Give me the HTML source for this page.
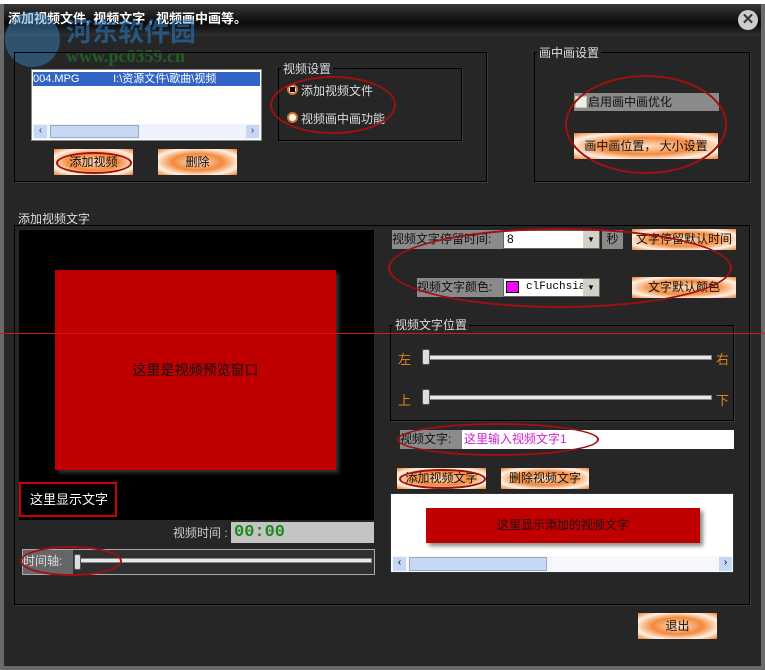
<!DOCTYPE html><html><head><meta charset="utf-8"><style>
*{margin:0;padding:0;box-sizing:border-box}
body{width:765px;height:670px;overflow:hidden;background:#fff;font-family:"Liberation Sans","Noto Sans CJK SC",sans-serif;font-size:12px;position:relative}
.a{position:absolute}
.win{left:0;top:4px;width:765px;height:666px;background:#262626;border:4px solid #6a6a6a;border-top:0}
.title{left:4px;top:4px;width:757px;height:32px;background:linear-gradient(#383838,#0a0a0a 60%,#303030)}
.grp{border:1px solid #000;box-shadow:1px 1px 0 #3a3a3a}
.lbl{color:#ddd;background:#262626;padding:0 2px;font-size:12px}
.btn{background:radial-gradient(ellipse at 50% 50%,#fde0c8 0,#f28a3c 45%,#fff2e6 75%,#ec7a2a 100%);color:#111;text-align:center;font-size:12px}
.ell{border:2px solid #a01010;border-radius:50%}
.gray{background:#8a8a8a;color:#111}
.track{height:5px;background:#e8e8e8;border:1px solid #888}
.thumb{width:8px;height:16px;background:#ddd;border:1px solid #555;border-radius:2px}
.or{color:#e08020;font-size:13px}
</style></head><body>
<div class="a win"></div>
<div class="a title"></div>
<div class="a" style="left:8px;top:8px;color:#fff;font-weight:bold;font-size:13px">添加视频文件, 视频文字 , 视频画中画等。</div>
<div class="a" style="left:5px;top:12px;width:55px;height:55px;border-radius:50%;background:rgba(60,140,200,.45)"></div>
<div class="a" style="left:66px;top:12px;color:rgba(40,120,190,.6);font-size:26px;font-weight:bold">河东软件园</div>
<div class="a" style="left:66px;top:46px;color:rgba(30,130,40,.6);font-size:18px;font-weight:bold;font-family:'Liberation Serif',serif">www.pc0359.cn</div>
<div class="a" style="left:738px;top:10px;width:20px;height:20px;border-radius:50%;background:#ccc;color:#333;font-weight:bold;text-align:center;line-height:20px;font-size:15px">✕</div>

<div class="a grp" style="left:14px;top:52px;width:473px;height:130px"></div>
<div class="a" style="left:31px;top:69px;width:231px;height:72px;background:#fff;border:1px solid #888"></div>
<div class="a" style="left:33px;top:72px;width:227px;height:14px;background:#3164c4;color:#fff;font-size:11px;line-height:14px;white-space:nowrap;overflow:hidden">004.MPG&nbsp;&nbsp;&nbsp;&nbsp;&nbsp;&nbsp;&nbsp;&nbsp;&nbsp;&nbsp;&nbsp;I:\资源文件\歌曲\视频</div>
<div class="a" style="left:33px;top:124px;width:227px;height:15px;background:#eef3fb"></div>
<div class="a" style="left:34px;top:125px;width:13px;height:13px;background:#c6d8f6;color:#335;font-size:10px;text-align:center">‹</div>
<div class="a" style="left:50px;top:125px;width:89px;height:13px;background:#c6d8f6;border:1px solid #9ab"></div>
<div class="a" style="left:246px;top:125px;width:13px;height:13px;background:#c6d8f6;color:#335;font-size:10px;text-align:center">›</div>
<div class="a grp" style="left:278px;top:68px;width:184px;height:73px"></div>
<div class="a lbl" style="left:281px;top:60px">视频设置</div>
<div class="a" style="left:287px;top:84px;width:11px;height:11px;border-radius:50%;background:#fff;border:2px solid #d87020"><div style="width:5px;height:5px;background:#000;margin:1px"></div></div>
<div class="a" style="left:301px;top:82px;color:#ddd">添加视频文件</div>
<div class="a" style="left:287px;top:112px;width:11px;height:11px;border-radius:50%;background:#fff;border:2px solid #d87020"></div>
<div class="a" style="left:301px;top:110px;color:#ddd">视频画中画功能</div>
<div class="a ell" style="left:270px;top:76px;width:126px;height:58px"></div>
<div class="a btn" style="left:54px;top:149px;width:79px;height:26px;line-height:26px">添加视频</div>
<div class="a ell" style="left:56px;top:152px;width:76px;height:22px"></div>
<div class="a btn" style="left:158px;top:149px;width:79px;height:26px;line-height:26px">删除</div>

<div class="a grp" style="left:534px;top:52px;width:216px;height:130px"></div>
<div class="a lbl" style="left:537px;top:44px">画中画设置</div>
<div class="a gray" style="left:574px;top:93px;width:145px;height:18px;line-height:18px;padding-left:14px">启用画中画优化</div>
<div class="a" style="left:575px;top:96px;width:12px;height:12px;background:#eee;border:1px solid #cc9"></div>
<div class="a btn" style="left:574px;top:133px;width:144px;height:26px;line-height:26px">画中画位置， 大小设置</div>
<div class="a ell" style="left:565px;top:75px;width:162px;height:99px"></div>

<div class="a lbl" style="left:16px;top:210px">添加视频文字</div>
<div class="a grp" style="left:14px;top:225px;width:736px;height:380px"></div>
<div class="a" style="left:19px;top:230px;width:355px;height:290px;background:#000"></div>
<div class="a" style="left:55px;top:270px;width:281px;height:200px;background:#c00000;box-shadow:3px 3px 4px #333;color:#111;font-size:14px;text-align:center;line-height:200px">这里是视频预览窗口</div>
<div class="a" style="left:19px;top:482px;width:98px;height:35px;border:2px solid #c00;color:#fff;font-size:13px;line-height:31px;padding-left:9px">这里显示文字</div>
<div class="a" style="left:173px;top:524px;color:#ccc">视频时间 :</div>
<div class="a" style="left:231px;top:522px;width:143px;height:21px;background:#c4c4c4;color:#1a8a1a;font-size:17px;font-weight:bold;padding-left:3px;line-height:21px;font-family:'Liberation Mono',monospace">00:00</div>
<div class="a" style="left:22px;top:549px;width:353px;height:26px;background:#303030;border:1px solid #aaa"></div>
<div class="a" style="left:23px;top:550px;width:50px;height:24px;background:#666;color:#ddd;line-height:22px">时间轴:</div>
<div class="a track" style="left:78px;top:558px;width:294px"></div>
<div class="a thumb" style="left:74px;top:554px;width:7px"></div>
<div class="a ell" style="left:20px;top:546px;width:102px;height:30px"></div>

<div class="a gray" style="left:392px;top:230px;width:111px;height:19px;line-height:19px">视频文字停留时间:</div>
<div class="a" style="left:503px;top:230px;width:97px;height:19px;background:#fff;border:1px solid #666;padding-left:3px;line-height:17px">8</div>
<div class="a" style="left:583px;top:231px;width:16px;height:17px;background:#d4d0c8;font-size:8px;text-align:center;line-height:17px">▼</div>
<div class="a gray" style="left:602px;top:230px;width:21px;height:19px;line-height:19px;text-align:center">秒</div>
<div class="a btn" style="left:632px;top:229px;width:104px;height:21px;line-height:21px">文字停留默认时间</div>
<div class="a gray" style="left:417px;top:278px;width:86px;height:19px;line-height:19px">视频文字颜色:</div>
<div class="a" style="left:503px;top:278px;width:97px;height:19px;background:#fff;border:1px solid #666;font-family:'Liberation Mono',monospace;font-size:11px;line-height:17px;padding-left:22px">clFuchsia</div>
<div class="a" style="left:506px;top:281px;width:13px;height:12px;background:#f0f;border:1px solid #000"></div>
<div class="a" style="left:583px;top:279px;width:16px;height:17px;background:#d4d0c8;font-size:8px;text-align:center;line-height:17px">▼</div>
<div class="a btn" style="left:632px;top:277px;width:104px;height:21px;line-height:21px">文字默认颜色</div>
<div class="a ell" style="left:388px;top:228px;width:344px;height:80px"></div>

<div class="a grp" style="left:390px;top:325px;width:344px;height:96px"></div>
<div class="a lbl" style="left:393px;top:316px">视频文字位置</div>
<div class="a or" style="left:398px;top:349px">左</div><div class="a or" style="left:716px;top:349px">右</div>
<div class="a track" style="left:425px;top:355px;width:287px"></div>
<div class="a thumb" style="left:422px;top:349px"></div>
<div class="a or" style="left:398px;top:390px">上</div><div class="a or" style="left:716px;top:390px">下</div>
<div class="a track" style="left:425px;top:395px;width:287px"></div>
<div class="a thumb" style="left:422px;top:389px"></div>

<div class="a gray" style="left:400px;top:430px;width:62px;height:19px;line-height:19px">视频文字:</div>
<div class="a" style="left:462px;top:430px;width:272px;height:19px;background:#fff;color:#d020d0;line-height:19px;padding-left:2px">这里输入视频文字1</div>
<div class="a ell" style="left:397px;top:423px;width:202px;height:33px"></div>
<div class="a btn" style="left:397px;top:468px;width:89px;height:21px;line-height:21px">添加视频文字</div>
<div class="a ell" style="left:399px;top:469px;width:87px;height:20px"></div>
<div class="a btn" style="left:501px;top:468px;width:88px;height:21px;line-height:21px">删除视频文字</div>
<div class="a" style="left:390px;top:493px;width:344px;height:80px;background:#fff;border:1px solid #333"></div>
<div class="a" style="left:426px;top:508px;width:274px;height:35px;background:#c00000;box-shadow:3px 3px 4px #888;line-height:35px;text-align:center;color:#111">这里显示添加的视频文字</div>
<div class="a" style="left:392px;top:556px;width:341px;height:16px;background:#f5f7fb"></div>
<div class="a" style="left:393px;top:557px;width:13px;height:14px;background:#c6d8f6;font-size:10px;text-align:center">‹</div>
<div class="a" style="left:409px;top:557px;width:138px;height:14px;background:#c6d8f6;border:1px solid #9ab"></div>
<div class="a" style="left:719px;top:557px;width:13px;height:14px;background:#c6d8f6;font-size:10px;text-align:center">›</div>

<div class="a btn" style="left:638px;top:613px;width:79px;height:26px;line-height:26px">退出</div>
<div class="a" style="left:0;top:333px;width:765px;height:1px;background:#d01818"></div>
</body></html>
